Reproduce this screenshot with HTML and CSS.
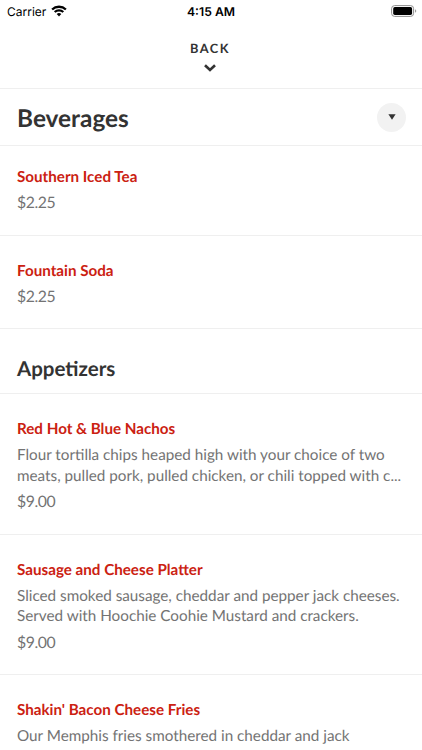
FILE: index.html
```html
<!DOCTYPE html>
<html lang="en">
<head>
    <meta charset="UTF-8">
    <meta name="viewport" content="width=device-width, initial-scale=1.0">
    <title>Menu</title>
    <link rel="stylesheet" href="styles.css">
</head>
<body>
    <div class="status-bar">
        <div class="carrier">
            <span>Carrier</span>
            <svg class="wifi" width="16" height="12" viewBox="0 0 16 12">
                <path d="M1.1 4.5a10 10 0 0 1 13.8 0M3.7 7a6.3 6.3 0 0 1 8.6 0" fill="none" stroke="#000" stroke-width="2.3"/>
                <path d="M8 11.4L5.7 9.1a3.4 3.4 0 0 1 4.6 0z"/>
            </svg>
        </div>
        <span class="time">4:15 AM</span>
        <svg class="battery" width="26" height="12" viewBox="0 0 26 12">
            <rect x="0.6" y="0.6" width="22" height="10.8" rx="3" fill="none" stroke="#8e8e8e"/>
            <rect x="2.2" y="2.1" width="18.9" height="7.8" rx="1.6"/>
            <path d="M24.1 4.2v3.6a2 2 0 0 0 0-3.6z" fill="#8e8e8e"/>
        </svg>
    </div>

    <div class="back">
        <span>BACK</span>
        <svg width="12" height="8" viewBox="0 0 12 8">
            <path d="M1 1.2L6 6l5-4.8" fill="none" stroke="#333" stroke-width="2.6"/>
        </svg>
    </div>

    <div class="category">
        <h1>Beverages</h1>
        <div class="dropdown">
            <svg width="8" height="6" viewBox="0 0 8 6">
                <path d="M0.4 0.3h7.2L4 5.8z" fill="#333"/>
            </svg>
        </div>
    </div>

    <div class="item first">
        <h3>Southern Iced Tea</h3>
        <p class="price">$2.25</p>
    </div>
    <div class="item">
        <h3>Fountain Soda</h3>
        <p class="price">$2.25</p>
    </div>

    <h2>Appetizers</h2>

    <div class="item">
        <h3>Red Hot &amp; Blue Nachos</h3>
        <p class="description">Flour tortilla chips heaped high with your choice of two<br>meats, pulled pork, pulled chicken, or chili topped with c...</p>
        <p class="price">$9.00</p>
    </div>
    <div class="item">
        <h3>Sausage and Cheese Platter</h3>
        <p class="description">Sliced smoked sausage, cheddar and pepper jack cheeses.<br>Served with Hoochie Coohie Mustard and crackers.</p>
        <p class="price">$9.00</p>
    </div>
    <div class="item">
        <h3>Shakin' Bacon Cheese Fries</h3>
        <p class="description">Our Memphis fries smothered in cheddar and jack</p>
    </div>
</body>
</html>
```

FILE: styles.css
```css
* {
    box-sizing: border-box;
}

html, body {
    height: 750px;
    overflow: hidden;
}

body {
    margin: 0;
    font-family: Lato, sans-serif;
    background-color: #fff;
    color: #333;
    text-rendering: geometricPrecision;
}

h1, h2, h3, p {
    margin: 0;
}

/* Status bar */
.status-bar {
    display: grid;
    grid-template-columns: 1fr auto 1fr;
    align-items: center;
    height: 22px;
    padding: 0 5px 0 7px;
    font-family: Inter, sans-serif;
    font-size: 12px;
    color: #000;
}

.carrier {
    display: flex;
    align-items: center;
    gap: 5px;
}

.time {
    margin-left: -2px;
    font-size: 12.2px;
    font-weight: 600;
}

.battery {
    justify-self: end;
}

/* Back button */
.back {
    display: flex;
    flex-direction: column;
    align-items: center;
    gap: 8px;
    height: 67px;
    padding: 18px 2px 0 0;
    border-bottom: 1px solid #efefef;
    font-size: 12.8px;
    font-weight: bold;
    line-height: 16px;
    letter-spacing: 1.5px;
}

/* Category header */
.category {
    display: flex;
    align-items: center;
    justify-content: space-between;
    height: 57px;
    padding: 0 16px 0 17px;
    border-bottom: 1px solid #efefef;
}

h1 {
    padding-top: 3px;
    font-size: 24.4px;
    line-height: 30px;
}

.dropdown {
    display: flex;
    align-items: center;
    justify-content: center;
    width: 29px;
    height: 29px;
    border-radius: 50%;
    background-color: #f2f2f2;
}

h2 {
    height: 65px;
    padding: 27px 17px 0;
    border-bottom: 1px solid #efefef;
    font-size: 20.5px;
    line-height: 26px;
}

/* Menu items */
.item {
    padding: 25px 17px 21.5px;
    border-bottom: 1px solid #efefef;
}

.item.first {
    padding-top: 21px;
}

h3 {
    font-size: 15.2px;
    line-height: 20px;
    color: #cb2111;
}

.description {
    margin-top: 6px;
    font-size: 15.25px;
    line-height: 20.5px;
    color: #737373;
    white-space: nowrap;
}

.price {
    margin-top: 6px;
    font-size: 15.8px;
    line-height: 20px;
    letter-spacing: -0.4px;
    color: #737373;
}
```
